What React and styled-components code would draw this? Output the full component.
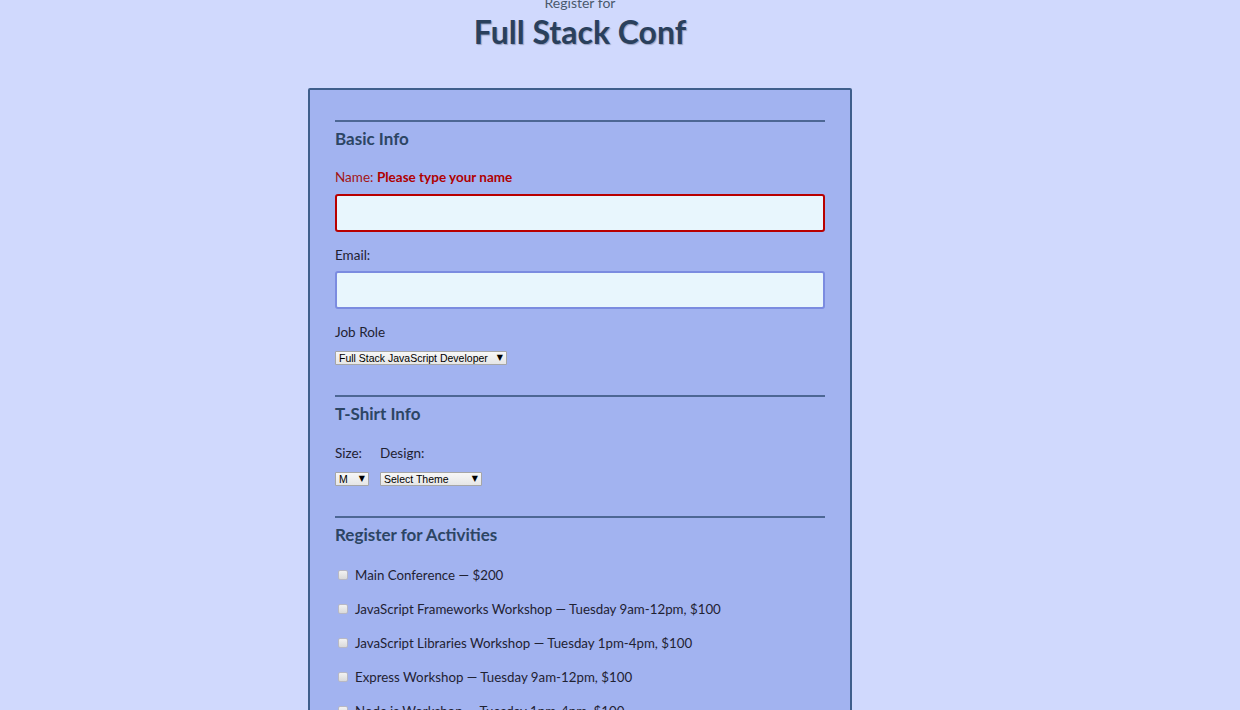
import React from 'react';
import styled, { createGlobalStyle } from 'styled-components';

const GlobalStyle = createGlobalStyle`
  html, body {
    margin: 0;
    padding: 0;
    background-color: #d0d9fd;
    font-family: Lato, "Noto Sans", sans-serif;
    color: #1f2233;
  }
`;

const Page = styled.div`
  display: flex;
  flex-direction: column;
  align-items: center;
  padding-right: 80px;
  height: 710px;
  overflow: hidden;
`;

const Header = styled.header`
  display: flex;
  flex-direction: column;
  align-items: center;
  margin-top: -6px;
`;

const Kicker = styled.span`
  font-size: 14px;
  line-height: 18px;
  color: #4b5a6e;
`;

const Title = styled.h1`
  margin: 0;
  font-size: 32px;
  line-height: 40px;
  font-weight: 700;
  color: #2a405c;
  text-shadow: 1px 1px 1px rgba(40, 50, 80, 0.35);
`;

const Form = styled.form`
  margin-top: 36px;
  width: 490px;
  padding: 30px 25px 0;
  background-color: #a2b3f0;
  border: 2px solid #3f5f8c;
  border-radius: 2px;
`;

const Section = styled.fieldset`
  margin: 0;
  padding: 0 0 30px;
  border: none;
  border-top: 2px solid #4d6794;
  display: flex;
  flex-direction: column;
  align-items: flex-start;
`;

const Heading = styled.h2`
  margin: 5px 0 0;
  font-size: 17px;
  line-height: 24px;
  font-weight: 700;
  color: #2c4564;
`;

const Label = styled.label`
  display: block;
  margin-top: ${p => p.$gap ?? 13}px;
  font-size: 13.5px;
  line-height: 20px;
  color: ${p => (p.$error ? '#a31515' : '#1f2233')};
`;

const ErrorText = styled.strong`
  font-weight: 700;
  color: #b00000;
`;

const TextInput = styled.input`
  box-sizing: border-box;
  width: 100%;
  height: 38px;
  margin-top: ${p => p.$gap ?? 7}px;
  padding: 0 8px;
  background-color: #e8f6fd;
  border: 2px solid ${p => (p.$error ? '#b80000' : '#7b8ce0')};
  border-radius: 3px;
  outline: none;
  font-size: 14px;
`;

const SelectBox = styled.div`
  position: relative;
  margin-top: 9px;
  width: ${p => p.$width}px;
`;

const NativeSelect = styled.select`
  appearance: none;
  -webkit-appearance: none;
  box-sizing: border-box;
  display: block;
  width: 100%;
  height: 14px;
  margin: 0;
  padding: 0 14px 0 3px;
  border: 1px solid #a6a6a6;
  border-radius: 1px;
  background: linear-gradient(#f7f7f7, #e6e6e6);
  font-family: "Liberation Sans", Arial, sans-serif;
  font-size: 10.5px;
  line-height: 12px;
  color: #000;
`;

const Arrow = styled.span`
  position: absolute;
  right: 4px;
  top: 0;
  font-family: "DejaVu Sans", sans-serif;
  font-size: 8px;
  line-height: 14px;
  color: #000;
  pointer-events: none;
`;

const ShirtRow = styled.div`
  display: flex;
  gap: 11px;
  margin-top: 17px;
`;

const ShirtField = styled.div`
  display: flex;
  flex-direction: column;
`;

const ActivityList = styled.div`
  display: flex;
  flex-direction: column;
  gap: 14px;
  margin-top: 18px;
`;

const Activity = styled.label`
  display: flex;
  align-items: center;
  gap: 7px;
  font-size: 13.3px;
  line-height: 20px;
  color: #1f2233;
`;

const Box = styled.span`
  box-sizing: border-box;
  width: 10px;
  height: 10px;
  margin-left: 3px;
  border: 1px solid #b8b8c4;
  border-radius: 2px;
  background: linear-gradient(#f2f2f2, #dadada);
`;

const Select = ({ width, options }) => (
  <SelectBox $width={width}>
    <NativeSelect defaultValue={options[0]}>
      {options.map(o => (
        <option key={o}>{o}</option>
      ))}
    </NativeSelect>
    <Arrow>▼</Arrow>
  </SelectBox>
);

const activities = [
  'Main Conference — $200',
  'JavaScript Frameworks Workshop — Tuesday 9am-12pm, $100',
  'JavaScript Libraries Workshop — Tuesday 1pm-4pm, $100',
  'Express Workshop — Tuesday 9am-12pm, $100',
  'Node.js Workshop — Tuesday 1pm-4pm, $100',
];

const App = () => (
  <>
    <GlobalStyle />
    <Page>
      <Header>
        <Kicker>Register for</Kicker>
        <Title>Full Stack Conf</Title>
      </Header>
      <Form onSubmit={e => e.preventDefault()}>
        <Section>
          <Heading>Basic Info</Heading>
          <Label $gap={16} $error>
            Name: <ErrorText>Please type your name</ErrorText>
          </Label>
          <TextInput $error />
          <Label>Email:</Label>
          <TextInput type="email" $gap={6} />
          <Label>Job Role</Label>
          <Select width={172} options={['Full Stack JavaScript Developer']} />
        </Section>
        <Section>
          <Heading>T-Shirt Info</Heading>
          <ShirtRow>
            <ShirtField>
              <Label $gap={0}>Size:</Label>
              <Select width={34} options={['M']} />
            </ShirtField>
            <ShirtField>
              <Label $gap={0}>Design:</Label>
              <Select width={102} options={['Select Theme']} />
            </ShirtField>
          </ShirtRow>
        </Section>
        <Section>
          <Heading>Register for Activities</Heading>
          <ActivityList>
            {activities.map(a => (
              <Activity key={a}>
                <Box />
                {a}
              </Activity>
            ))}
          </ActivityList>
        </Section>
      </Form>
    </Page>
  </>
);

export default App;
